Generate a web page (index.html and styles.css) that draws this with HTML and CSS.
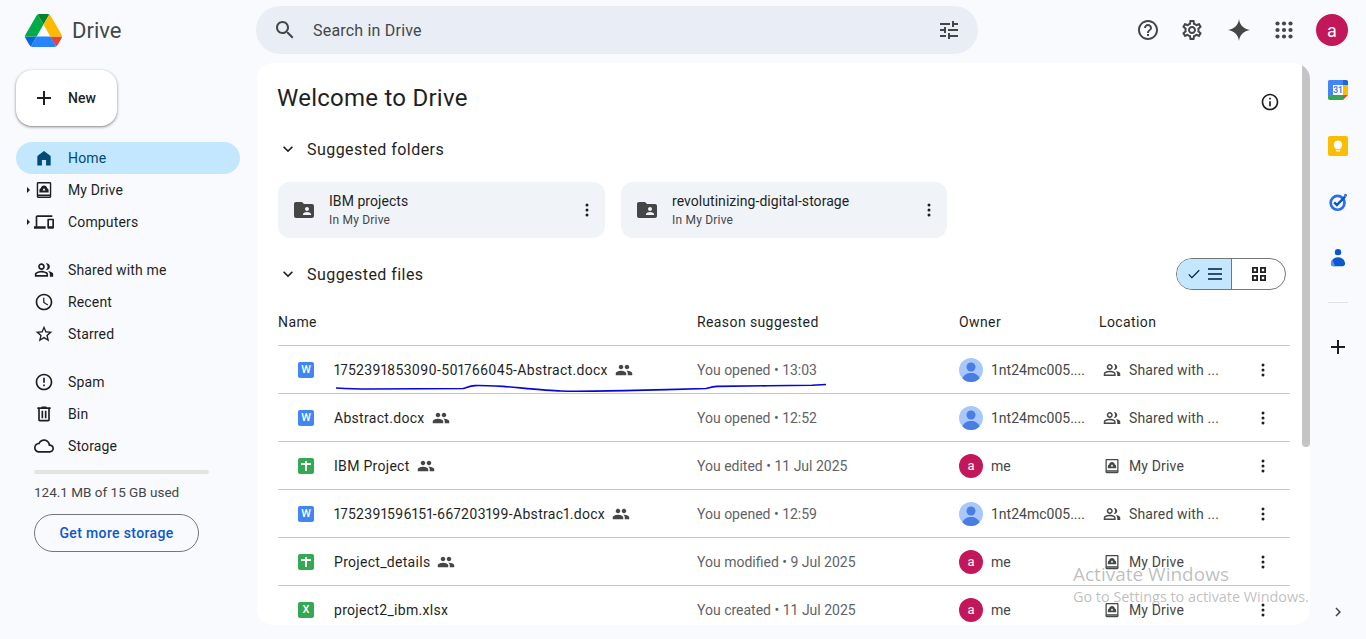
FILE: index.html
```html
<!DOCTYPE html>
<html lang="en">
<head>
<meta charset="utf-8">
<title>Home - Google Drive</title>
<link rel="stylesheet" href="styles.css">
</head>
<body>
<svg class="sprite" xmlns="http://www.w3.org/2000/svg">
  <symbol id="i-search" viewBox="0 0 24 24"><path d="M15.5 14h-.79l-.28-.27C15.41 12.59 16 11.11 16 9.5 16 5.91 13.09 3 9.5 3S3 5.91 3 9.5 5.91 16 9.5 16c1.61 0 3.09-.59 4.23-1.57l.27.28v.79l5 4.99L20.49 19l-4.99-5zm-6 0C7.01 14 5 11.99 5 9.5S7.01 5 9.5 5 14 7.01 14 9.5 11.99 14 9.5 14z"/></symbol>
  <symbol id="i-tune" viewBox="0 0 24 24"><path d="M3 17v2h6v-2H3zM3 5v2h10V5H3zm10 16v-2h8v-2h-8v-2h-2v6h2zM7 9v2H3v2h4v2h2V9H7zm14 4v-2H11v2h10zm-6-4h2V7h4V5h-4V3h-2v6z"/></symbol>
  <symbol id="i-help" viewBox="0 0 24 24"><path d="M11 18h2v-2h-2v2zm1-16C6.48 2 2 6.48 2 12s4.48 10 10 10 10-4.48 10-10S17.52 2 12 2zm0 18c-4.41 0-8-3.59-8-8s3.59-8 8-8 8 3.59 8 8-3.59 8-8 8zm0-14c-2.21 0-4 1.79-4 4h2c0-1.1.9-2 2-2s2 .9 2 2c0 2-3 1.75-3 5h2c0-2.25 3-2.5 3-5 0-2.21-1.79-4-4-4z"/></symbol>
  <symbol id="i-gear" viewBox="0 0 24 24"><path d="M19.43 12.98c.04-.32.07-.64.07-.98 0-.34-.03-.66-.07-.98l2.11-1.65c.19-.15.24-.42.12-.64l-2-3.46c-.09-.16-.26-.25-.44-.25-.06 0-.12.01-.17.03l-2.49 1c-.52-.4-1.08-.73-1.69-.98l-.38-2.65C14.46 2.18 14.25 2 14 2h-4c-.25 0-.46.18-.49.42l-.38 2.65c-.61.25-1.17.59-1.69.98l-2.49-1c-.06-.02-.12-.03-.18-.03-.17 0-.34.09-.43.25l-2 3.46c-.13.22-.07.49.12.64l2.11 1.65c-.04.32-.07.65-.07.98 0 .33.03.66.07.98l-2.11 1.65c-.19.15-.24.42-.12.64l2 3.46c.09.16.26.25.44.25.06 0 .12-.01.17-.03l2.49-1c.52.4 1.08.73 1.69.98l.38 2.65c.03.24.24.42.49.42h4c.25 0 .46-.18.49-.42l.38-2.65c.61-.25 1.17-.59 1.69-.98l2.49 1c.06.02.12.03.18.03.17 0 .34-.09.43-.25l2-3.46c.12-.22.07-.49-.12-.64l-2.11-1.65zm-1.98-1.71c.04.31.05.52.05.73 0 .21-.02.43-.05.73l-.14 1.13.89.7 1.08.84-.7 1.21-1.27-.51-1.04-.42-.9.68c-.43.32-.84.56-1.25.73l-1.06.43-.16 1.13-.2 1.35h-1.4l-.19-1.35-.16-1.13-1.06-.43c-.43-.18-.83-.41-1.23-.71l-.91-.7-1.06.43-1.27.51-.7-1.21 1.08-.84.89-.7-.14-1.13c-.03-.31-.05-.54-.05-.74s.02-.43.05-.73l.14-1.13-.89-.7-1.08-.84.7-1.21 1.27.51 1.04.42.9-.68c.43-.32.84-.56 1.25-.73l1.06-.43.16-1.13.2-1.35h1.39l.19 1.35.16 1.13 1.06.43c.43.18.83.41 1.23.71l.91.7 1.06-.43 1.27-.51.7 1.21-1.07.85-.89.7.14 1.13zM12 8c-2.21 0-4 1.79-4 4s1.79 4 4 4 4-1.79 4-4-1.79-4-4-4zm0 6c-1.1 0-2-.9-2-2s.9-2 2-2 2 .9 2 2-.9 2-2 2z"/></symbol>
  <symbol id="i-spark" viewBox="0 0 24 24"><path d="M12 1C12.7 7 17 11.3 23 12 17 12.7 12.7 17 12 23 11.3 17 7 12.7 1 12 7 11.3 11.3 7 12 1z"/></symbol>
  <symbol id="i-apps" viewBox="0 0 24 24"><circle cx="5.5" cy="5.5" r="2.1"/><circle cx="12" cy="5.5" r="2.1"/><circle cx="18.5" cy="5.5" r="2.1"/><circle cx="5.5" cy="12" r="2.1"/><circle cx="12" cy="12" r="2.1"/><circle cx="18.5" cy="12" r="2.1"/><circle cx="5.5" cy="18.5" r="2.1"/><circle cx="12" cy="18.5" r="2.1"/><circle cx="18.5" cy="18.5" r="2.1"/></symbol>
  <symbol id="i-home" viewBox="0 0 24 24"><path d="M4 21V10.5C4 9.9 4.3 9.3 4.8 8.9L10.8 4.4C11.5 3.9 12.5 3.9 13.2 4.4L19.2 8.9C19.7 9.3 20 9.9 20 10.5V21H14.5V14.5H9.5V21z"/></symbol>
  <symbol id="i-mydrive" viewBox="0 0 24 24"><path fill-rule="evenodd" d="M5 2.5h14c1 0 1.7.7 1.7 1.7v15.6c0 1-.7 1.7-1.7 1.7H5c-1 0-1.7-.7-1.7-1.7V4.200c0-1 .7-1.7 1.700-1.700zM5 4.200V17.500h14V4.200zM5 19.200v.6h14v-.6zM12 6.500c2 0 3.600 1.500 3.800 3.400 1 .3 1.700 1.200 1.700 2.300V15H6.500V12.200c0-1.100.7-2 1.700-2.300C8.400 8 10 6.500 12 6.500zM12 9.500l-1.800 3h3.600z"/></symbol>
  <symbol id="i-devices" viewBox="0 0 24 24"><path d="M4 6h18V4H4c-1.100 0-2 .9-2 2v11H0v3h14v-3H4V6zm19 2h-6c-.55 0-1 .45-1 1v10c0 .55.45 1 1 1h6c.55 0 1-.45 1-1V9c0-.55-.45-1-1-1zm-1 9h-4v-7h4v7z"/></symbol>
  <symbol id="i-peopleo" viewBox="0 0 24 24"><path d="M1 20v-2.800c0-.57.15-1.090.44-1.560.29-.47.67-.83 1.160-1.080.99-.5 2-.87 3.030-1.130A13.400 13.400 0 0 1 9 13c1.100 0 2.220.14 3.200.4 1.050.26 2.050.63 3.050 1.130.48.25.86.61 1.150 1.080.3.47.45.99.45 1.560V20H1zm18 0v-3c0-.73-.2-1.430-.61-2.100-.41-.67-.99-1.250-1.740-1.730.85.1 1.650.27 2.400.51.75.24 1.450.54 2.100.89.6.33 1.060.7 1.380 1.110.32.4.47.85.47 1.320v3h-4zM9 12c-1.100 0-2.040-.39-2.830-1.180C5.390 10.040 5 9.100 5 8s.39-2.040 1.170-2.820C6.960 4.390 7.900 4 9 4s2.040.39 2.830 1.180C12.610 5.960 13 6.900 13 8s-.39 2.040-1.170 2.820C11.040 11.610 10.100 12 9 12zm10-4c0 1.100-.39 2.040-1.170 2.820C17.040 11.610 16.100 12 15 12c-.18 0-.42-.02-.7-.06a6 6 0 0 0 1.420-1.800C16.070 9.490 16.250 8.770 16.250 8s-.18-1.490-.53-2.140a6 6 0 0 0-1.420-1.800c.28-.04.52-.06.7-.06 1.100 0 2.040.39 2.830 1.180C18.610 5.960 19 6.900 19 8zM3 18h12v-.8a1 1 0 0 0-.5-.85c-.9-.45-1.800-.79-2.730-1.020A11.700 11.700 0 0 0 9 15c-.93 0-1.850.11-2.780.33-.92.23-1.820.57-2.720 1.020A1 1 0 0 0 3 17.200V18zm6-8c.55 0 1.020-.2 1.410-.59C10.800 9.020 11 8.550 11 8s-.2-1.020-.59-1.410A1.930 1.930 0 0 0 9 6c-.55 0-1.020.2-1.410.59C7.200 6.980 7 7.450 7 8s.2 1.020.59 1.410C7.980 9.800 8.450 10 9 10z"/></symbol>
  <symbol id="i-people" viewBox="0 0 24 24"><path d="M16 11c1.660 0 2.990-1.340 2.990-3S17.660 5 16 5c-1.660 0-3 1.340-3 3s1.340 3 3 3zm-8 0c1.660 0 2.990-1.340 2.990-3S9.660 5 8 5C6.340 5 5 6.340 5 8s1.340 3 3 3zm0 2c-2.330 0-7 1.170-7 3.500V19h14v-2.500c0-2.330-4.670-3.500-7-3.500zm8 0c-.29 0-.62.02-.97.05 1.160.84 1.970 1.970 1.970 3.450V19h6v-2.500c0-2.330-4.670-3.500-7-3.500z"/></symbol>
  <symbol id="i-clock" viewBox="0 0 24 24"><path d="M11.990 2C6.470 2 2 6.480 2 12s4.470 10 9.990 10C17.520 22 22 17.520 22 12S17.520 2 11.990 2zM12 20c-4.420 0-8-3.580-8-8s3.580-8 8-8 8 3.580 8 8-3.580 8-8 8zm.5-13H11v6l5.250 3.150.75-1.230-4.500-2.670z"/></symbol>
  <symbol id="i-star" viewBox="0 0 24 24"><path d="M22 9.240l-7.190-.62L12 2 9.190 8.630 2 9.240l5.460 4.730L5.820 21 12 17.270 18.180 21l-1.630-7.030L22 9.240zM12 15.400l-3.760 2.270 1-4.280-3.320-2.880 4.380-.38L12 6.100l1.710 4.040 4.380.38-3.320 2.880 1 4.280L12 15.400z"/></symbol>
  <symbol id="i-spam" viewBox="0 0 24 24"><path d="M11 15h2v2h-2zm0-8h2v6h-2zm.99-5C6.470 2 2 6.480 2 12s4.470 10 9.990 10C17.520 22 22 17.520 22 12S17.520 2 11.990 2zM12 20c-4.420 0-8-3.580-8-8s3.580-8 8-8 8 3.580 8 8-3.580 8-8 8z"/></symbol>
  <symbol id="i-bin" viewBox="0 0 24 24"><path d="M15 4V3H9v1H4v2h1v13c0 1.100.9 2 2 2h10c1.100 0 2-.9 2-2V6h1V4h-5zm2 15H7V6h10v13zM9 8h2v9H9zm4 0h2v9h-2z"/></symbol>
  <symbol id="i-cloud" viewBox="0 0 24 24"><path d="M19.350 10.040C18.670 6.590 15.640 4 12 4 9.110 4 6.600 5.640 5.350 8.040 2.340 8.360 0 10.910 0 14c0 3.310 2.690 6 6 6h13c2.760 0 5-2.240 5-5 0-2.640-2.050-4.780-4.650-4.960zM19 18H6c-2.210 0-4-1.790-4-4s1.790-4 4-4h.71C7.370 7.690 9.480 6 12 6c3.040 0 5.500 2.460 5.500 5.500v.5H19c1.660 0 3 1.340 3 3s-1.340 3-3 3z"/></symbol>
  <symbol id="i-info" viewBox="0 0 24 24"><path d="M11 7h2v2h-2zm0 4h2v6h-2zm1-9C6.480 2 2 6.480 2 12s4.480 10 10 10 10-4.480 10-10S17.520 2 12 2zm0 18c-4.410 0-8-3.590-8-8s3.590-8 8-8 8 3.590 8 8-3.590 8-8 8z"/></symbol>
  <symbol id="i-more" viewBox="0 0 24 24"><circle cx="12" cy="6" r="1.800"/><circle cx="12" cy="12" r="1.800"/><circle cx="12" cy="18" r="1.800"/></symbol>
  <symbol id="i-expand" viewBox="0 0 24 24"><path d="M7.410 8.590L12 13.170l4.590-4.580L18 10l-6 6-6-6z"/></symbol>
  <symbol id="i-folder" viewBox="0 0 24 24"><path d="M20 6h-8l-2-2H4c-1.100 0-2 .9-2 2v12c0 1.100.9 2 2 2h16c1.100 0 2-.9 2-2V8c0-1.100-.9-2-2-2zm-5 3c1.100 0 2 .9 2 2s-.9 2-2 2-2-.9-2-2 .9-2 2-2zm4 8h-8v-1c0-1.330 2.670-2 4-2s4 .67 4 2v1z"/></symbol>
  <symbol id="i-plus" viewBox="0 0 24 24"><path d="M19 13h-6v6h-2v-6H5v-2h6V5h2v6h6z"/></symbol>
  <symbol id="i-avatar" viewBox="0 0 24 24"><circle cx="12" cy="12" r="12" fill="#a8c7fa"/><circle cx="12" cy="9" r="4.500" fill="#4a7de0"/><path d="M3.500 20.400C4.500 17 8 15 12 15s7.500 2 8.500 5.400C18.300 22.600 15.300 24 12 24s-6.300-1.400-8.500-3.600z" fill="#4a7de0"/></symbol>
</svg>

<header class="topbar">
  <div class="brand">
    <svg class="brand-logo" viewBox="0 0 87.300 78" xmlns="http://www.w3.org/2000/svg">
      <path d="m6.600 66.850 3.850 6.650c.8 1.400 1.950 2.500 3.300 3.300l13.750-23.800h-27.500c0 1.550.4 3.100 1.200 4.500z" fill="#0066da"/>
      <path d="m43.650 25-13.750-23.800c-1.350.8-2.500 1.900-3.300 3.300l-25.400 44a9.060 9.060 0 0 0 -1.200 4.500h27.500z" fill="#00ac47"/>
      <path d="m73.550 76.800c1.350-.8 2.500-1.900 3.300-3.300l1.600-2.750 7.650-13.250c.8-1.400 1.200-2.950 1.200-4.500h-27.502l5.852 11.500z" fill="#ea4335"/>
      <path d="m43.650 25 13.750-23.800c-1.350-.8-2.900-1.200-4.500-1.200h-18.500c-1.600 0-3.150.45-4.500 1.200z" fill="#00832d"/>
      <path d="m59.800 53h-32.300l-13.750 23.800c1.350.8 2.900 1.200 4.500 1.200h50.800c1.600 0 3.150-.45 4.500-1.200z" fill="#2684fc"/>
      <path d="m73.400 26.500-12.700-22c-.8-1.400-1.950-2.500-3.300-3.300l-13.750 23.800 16.150 28h27.450c0-1.550-.4-3.100-1.200-4.500z" fill="#ffba00"/>
    </svg>
    <span class="brand-name">Drive</span>
  </div>
  <div class="search">
    <svg class="ic24 c-dark"><use href="#i-search"/></svg>
    <span class="search-text">Search in Drive</span>
    <svg class="ic24 c-dark search-tune"><use href="#i-tune"/></svg>
  </div>
  <div class="actions">
    <svg class="ic24 c-dark"><use href="#i-help"/></svg>
    <svg class="ic24 c-dark"><use href="#i-gear"/></svg>
    <svg class="ic24 c-dark act-spark"><use href="#i-spark"/></svg>
    <svg class="ic24 c-dark act-apps"><use href="#i-apps"/></svg>
    <span class="avatar-main">a</span>
  </div>
</header>

<div class="layout">
  <aside class="sidebar">
    <button class="new-btn"><svg class="ic24 c-black"><use href="#i-plus"/></svg><span>New</span></button>
    <nav class="nav">
      <div class="nav-group">
        <a class="nav-item active"><span class="caret none"></span><svg class="ic20"><use href="#i-home"/></svg><span class="nav-label">Home</span></a>
        <a class="nav-item"><span class="caret"></span><svg class="ic20"><use href="#i-mydrive"/></svg><span class="nav-label">My Drive</span></a>
        <a class="nav-item"><span class="caret"></span><svg class="ic20"><use href="#i-devices"/></svg><span class="nav-label">Computers</span></a>
      </div>
      <div class="nav-group">
        <a class="nav-item"><span class="caret none"></span><svg class="ic20"><use href="#i-peopleo"/></svg><span class="nav-label">Shared with me</span></a>
        <a class="nav-item"><span class="caret none"></span><svg class="ic20"><use href="#i-clock"/></svg><span class="nav-label">Recent</span></a>
        <a class="nav-item"><span class="caret none"></span><svg class="ic20"><use href="#i-star"/></svg><span class="nav-label">Starred</span></a>
      </div>
      <div class="nav-group">
        <a class="nav-item"><span class="caret none"></span><svg class="ic20"><use href="#i-spam"/></svg><span class="nav-label">Spam</span></a>
        <a class="nav-item"><span class="caret none"></span><svg class="ic20"><use href="#i-bin"/></svg><span class="nav-label">Bin</span></a>
        <a class="nav-item"><span class="caret none"></span><svg class="ic20"><use href="#i-cloud"/></svg><span class="nav-label">Storage</span></a>
      </div>
    </nav>
    <div class="storage">
      <div class="storage-bar"></div>
      <div class="storage-text">124.1 MB of 15 GB used</div>
      <button class="storage-btn">Get more storage</button>
    </div>
  </aside>

  <main class="panel">
    <div class="content">
      <div class="welcome">
        <h1>Welcome to Drive</h1>
        <svg class="ic20 c-black"><use href="#i-info"/></svg>
      </div>
      <div class="section-head"><svg class="ic20 c-black"><use href="#i-expand"/></svg><span>Suggested folders</span></div>
      <div class="folders">
        <div class="folder">
          <svg class="ic24 c-dark"><use href="#i-folder"/></svg>
          <div class="folder-text"><div class="folder-name">IBM projects</div><div class="folder-sub">In My Drive</div></div>
          <svg class="ic20 c-black"><use href="#i-more"/></svg>
        </div>
        <div class="folder folder-b">
          <svg class="ic24 c-dark"><use href="#i-folder"/></svg>
          <div class="folder-text"><div class="folder-name">revolutinizing-digital-storage</div><div class="folder-sub">In My Drive</div></div>
          <svg class="ic20 c-black"><use href="#i-more"/></svg>
        </div>
      </div>
      <div class="files-head">
        <div class="section-head flat"><svg class="ic20 c-black"><use href="#i-expand"/></svg><span>Suggested files</span></div>
        <div class="toggle">
          <div class="toggle-list">
            <svg class="tg-check" viewBox="0 0 16 16"><path d="M2 8.500l3.600 3.600L14 3.700" fill="none" stroke="#001d35" stroke-width="1.300"/></svg>
            <svg class="tg-lines" viewBox="0 0 16 16"><path d="M1 3h14M1 8h14M1 13h14" stroke="#001d35" stroke-width="1.600"/></svg>
          </div>
          <div class="toggle-grid">
            <svg class="tg-grid" viewBox="0 0 16 16"><path fill-rule="evenodd" d="M1 1h6v6H1zM2.800 2.800v2.400h2.400V2.800zM9 1h6v6H9zM10.800 2.800v2.400h2.400V2.800zM1 9h6v6H1zM2.800 10.800v2.400h2.400v-2.400zM9 9h6v6H9zM10.800 10.800v2.400h2.400v-2.400z" fill="#1f1f1f"/></svg>
          </div>
        </div>
      </div>

      <div class="table">
        <div class="row row-head">
          <div>Name</div><div>Reason suggested</div><div>Owner</div><div>Location</div><div></div>
        </div>

        <div class="row">
          <div class="c-name"><span class="ft ft-doc">W</span><span class="fname">1752391853090-501766045-Abstract.docx</span><svg class="ic18"><use href="#i-people"/></svg></div>
          <div class="c-reason">You opened • 13:03</div>
          <div class="c-owner"><svg class="ic24"><use href="#i-avatar"/></svg><span>1nt24mc005....</span></div>
          <div class="c-loc"><svg class="ic18"><use href="#i-peopleo"/></svg><span>Shared with ...</span></div>
          <svg class="ic20 c-black"><use href="#i-more"/></svg>
        </div>
        <div class="row">
          <div class="c-name"><span class="ft ft-doc">W</span><span class="fname">Abstract.docx</span><svg class="ic18"><use href="#i-people"/></svg></div>
          <div class="c-reason">You opened • 12:52</div>
          <div class="c-owner"><svg class="ic24"><use href="#i-avatar"/></svg><span>1nt24mc005....</span></div>
          <div class="c-loc"><svg class="ic18"><use href="#i-peopleo"/></svg><span>Shared with ...</span></div>
          <svg class="ic20 c-black"><use href="#i-more"/></svg>
        </div>
        <div class="row">
          <div class="c-name"><span class="ft ft-sheet"><i class="cross"></i></span><span class="fname">IBM Project</span><svg class="ic18"><use href="#i-people"/></svg></div>
          <div class="c-reason">You edited • 11 Jul 2025</div>
          <div class="c-owner"><span class="avatar-sm">a</span><span>me</span></div>
          <div class="c-loc"><svg class="ic18"><use href="#i-mydrive"/></svg><span>My Drive</span></div>
          <svg class="ic20 c-black"><use href="#i-more"/></svg>
        </div>
        <div class="row">
          <div class="c-name"><span class="ft ft-doc">W</span><span class="fname">1752391596151-667203199-Abstrac1.docx</span><svg class="ic18"><use href="#i-people"/></svg></div>
          <div class="c-reason">You opened • 12:59</div>
          <div class="c-owner"><svg class="ic24"><use href="#i-avatar"/></svg><span>1nt24mc005....</span></div>
          <div class="c-loc"><svg class="ic18"><use href="#i-peopleo"/></svg><span>Shared with ...</span></div>
          <svg class="ic20 c-black"><use href="#i-more"/></svg>
        </div>
        <div class="row">
          <div class="c-name"><span class="ft ft-sheet"><i class="cross"></i></span><span class="fname">Project_details</span><svg class="ic18"><use href="#i-people"/></svg></div>
          <div class="c-reason">You modified • 9 Jul 2025</div>
          <div class="c-owner"><span class="avatar-sm">a</span><span>me</span></div>
          <div class="c-loc"><svg class="ic18"><use href="#i-mydrive"/></svg><span>My Drive</span></div>
          <svg class="ic20 c-black"><use href="#i-more"/></svg>
        </div>
        <div class="row">
          <div class="c-name"><span class="ft ft-xls">X</span><span class="fname">project2_ibm.xlsx</span></div>
          <div class="c-reason">You created • 11 Jul 2025</div>
          <div class="c-owner"><span class="avatar-sm">a</span><span>me</span></div>
          <div class="c-loc"><svg class="ic18"><use href="#i-mydrive"/></svg><span>My Drive</span></div>
          <svg class="ic20 c-black"><use href="#i-more"/></svg>
        </div>
      </div>
    </div>
    <div class="scrollbar"><div class="thumb"></div></div>
  </main>

  <aside class="rail">
    <svg class="rail-ic" viewBox="0 0 24 24">
      <path d="M2 0h18v6H6v12H0V2C0 1 1 0 2 0z" fill="#4285f4"/>
      <path d="M18 0h4c1 0 2 1 2 2v4h-6z" fill="#1967d2"/>
      <path d="M18 6h6v12h-6z" fill="#fbbc04"/>
      <path d="M0 18h18v6H2c-1 0-2-1-2-2z" fill="#34a853"/>
      <path d="M18 18h6l-6 6z" fill="#ea4335"/>
      <path d="M6 6h12v12H6z" fill="#fff"/>
      <text x="12" y="16" class="cal-num">31</text>
    </svg>
    <svg class="rail-ic" viewBox="0 0 24 24">
      <rect width="24" height="24" rx="2.500" fill="#fbbc04"/>
      <path d="M12 5.500a5 5 0 0 1 3 9v1.500H9v-1.500a5 5 0 0 1 3-9z" fill="#fff"/>
      <path d="M9.500 17.200h5v1.300h-5z" fill="#fff"/>
    </svg>
    <svg class="rail-ic" viewBox="0 0 24 24">
      <circle cx="11.500" cy="13" r="8.300" fill="none" stroke="#2a6fe8" stroke-width="3.200"/>
      <path d="M7.500 12.500l3.200 3.200L20.500 5.500" fill="none" stroke="#0b57d0" stroke-width="3"/>
      <circle cx="21" cy="4" r="1.800" fill="#2a6fe8"/>
    </svg>
    <svg class="rail-ic" viewBox="0 0 24 24">
      <circle cx="12" cy="5" r="3.800" fill="#0b57d0"/>
      <path d="M3.500 19c0-4 3.500-8 8.500-8s8.500 4 8.500 8c0 1.800-1.500 3-3 3h-11c-1.500 0-3-1.200-3-3z" fill="#0b57d0"/>
      <path d="M3.500 19c0-1.800.8-3.600 2-5l3 8h-2.500c-1.500 0-2.500-1.300-2.500-3z" fill="#5a8ee8"/>
    </svg>
    <div class="rail-div"></div>
    <svg class="rail-ic c-black"><use href="#i-plus"/></svg>
    <svg class="rail-chev" viewBox="0 0 24 24"><path d="M8.590 16.590L13.170 12 8.590 7.410 10 6l6 6-6 6z"/></svg>
  </aside>
</div>

<svg class="scribble" viewBox="0 0 1366 639" xmlns="http://www.w3.org/2000/svg"><path d="M336 388C345 388.500 358 389 368 389S440 388.500 463 388.500C468 387 470 385.800 475 385.600S495 386 503 386.400 545 390.500 561 391 615 390.800 634 390.400 695 388.800 706 388.500C710 387.500 712 386.700 717 386.400S790 385.600 812 385.300L826 384.500" fill="none" stroke="#0606dc" stroke-width="1.600"/></svg>

<div class="watermark">
  <div class="wm-title">Activate Windows</div>
  <div class="wm-sub">Go to Settings to activate Windows.</div>
</div>
</body>
</html>
```
FILE: styles.css
```css
* { box-sizing: border-box; }
html, body { height: 100%; }
body {
  margin: 0;
  height: 100vh;
  overflow: hidden;
  background: #f8fafd;
  color: #1f1f1f;
  font-family: Roboto, "Noto Sans", "Liberation Sans", sans-serif;
  font-size: 14px;
  display: flex;
  flex-direction: column;
  position: relative;
}
.sprite { display: none; }
svg { flex: none; display: block; fill: currentColor; }
.ic24 { width: 24px; height: 24px; }
.ic20 { width: 20px; height: 20px; }
.ic18 { width: 18px; height: 18px; }
.c-dark { color: #444746; }
.c-black { color: #1f1f1f; }

/* top bar */
.topbar { height: 60px; flex: none; display: flex; align-items: center; }
.brand { width: 256px; flex: none; display: flex; align-items: center; padding-left: 25px; }
.brand-logo { width: 37px; height: 33px; }
.brand-name { margin-left: 10px; font-size: 22px; color: #444746; }
.search {
  width: 722px; height: 48px; border-radius: 24px; background: #e9eef6;
  display: flex; align-items: center; padding: 0 17px;
}
.search-text { margin-left: 16px; font-size: 16px; color: #444746; letter-spacing: .2px; }
.search-tune { margin-left: auto; }
.actions { flex: 1; display: flex; align-items: center; justify-content: flex-end; gap: 20px; padding-right: 18px; }
.act-spark { margin-left: 3px; }
.act-apps { margin-left: 1px; }
.avatar-main {
  width: 32px; height: 32px; border-radius: 50%; background: #c2185b; color: #fff;
  display: flex; align-items: center; justify-content: center; font-size: 18px;
}

/* layout */
.layout { flex: 1; min-height: 0; display: flex; margin-top: 3px; margin-bottom: 14px; }

/* sidebar */
.sidebar { width: 257px; flex: none; padding-top: 7px; }
.new-btn {
  margin-left: 16px; width: 101px; height: 56px; border: 0; border-radius: 16px; background: #fff;
  box-shadow: 0 1px 2px rgba(0,0,0,.3), 0 1px 3px 1px rgba(0,0,0,.15);
  display: flex; align-items: center; gap: 12px; padding: 0 0 0 16px;
  font: 500 14px Roboto, sans-serif; color: #1f1f1f;
}
.nav { margin-top: 16px; }
.nav-group { margin-bottom: 16px; }
.nav-item { display: flex; align-items: center; height: 32px; width: 224px; margin-left: 16px; border-radius: 16px; padding-left: 11px; color: #1f1f1f; letter-spacing: .15px; }
.nav-item.active { background: #c2e7ff; color: #004a77; }
.caret { width: 0; height: 0; border-left: 3px solid #1f1f1f; border-top: 3px solid transparent; border-bottom: 3px solid transparent; margin-right: 4px; }
.caret.none { border-color: transparent; }
.nav-label { margin-left: 14px; }
.storage { margin-left: 34px; margin-top: -8px; }
.storage-bar { width: 175px; height: 4px; border-radius: 2px; background: #e3e3e0; }
.storage-text { margin-top: 10px; line-height: 16px; color: #444746; font-size: 13.5px; }
.storage-btn {
  margin-top: 14px; width: 165px; height: 38px; border-radius: 19px; border: 1px solid #747775; background: transparent;
  color: #0b57d0; font: 500 14px Roboto, sans-serif; letter-spacing: .35px;
}

/* main panel */
.panel { width: 1053px; flex: none; background: #fff; border-radius: 16px; overflow: hidden; display: flex; }
.content { flex: 1; min-width: 0; padding: 0 12px 0 21px; }
.scrollbar { width: 8px; flex: none; }
.thumb { height: 384px; background: #c4c4c4; border-radius: 4px 0 4px 4px; }
.welcome { height: 70px; display: flex; align-items: center; justify-content: space-between; padding-right: 10px; }
.welcome .ic20 { margin-top: 7px; }
h1 { margin: 0 0 0 -1px; font-size: 24px; font-weight: 400; line-height: 32px; letter-spacing: .25px; }
.section-head { display: flex; align-items: center; gap: 9px; height: 32px; font-size: 16px; font-weight: 400; letter-spacing: .45px; margin-bottom: 17px; }
.section-head.flat { margin-bottom: 0; }
.folders { display: flex; gap: 16px; }
.folder { width: 327px; height: 56px; background: #f0f4f9; border-radius: 12px; display: flex; align-items: center; padding: 0 8px 0 14px; }
.folder-b { width: 326px; }
.folder-text { margin-left: 13px; flex: 1; }
.folder-name { font-size: 14px; line-height: 19px; letter-spacing: .05px; }
.folder-sub { font-size: 12px; line-height: 16px; margin-top: 1px; color: #444746; letter-spacing: .2px; }
.files-head { display: flex; align-items: center; justify-content: space-between; margin-top: 20px; margin-right: 4px; height: 32px; }
.toggle { width: 110px; height: 32px; border: 1px solid #747775; border-radius: 16px; display: flex; overflow: hidden; }
.toggle-list { width: 55px; background: #c2e7ff; border-right: 1px solid #747775; display: flex; align-items: center; padding-left: 10px; gap: 6px; }
.toggle-grid { flex: 1; display: flex; align-items: center; justify-content: center; }
.tg-check { width: 14px; height: 14px; }
.tg-lines { width: 16px; height: 16px; }
.tg-grid { width: 16px; height: 16px; }

/* table */
.table { margin-top: 9px; }
.row {
  display: grid; grid-template-columns: 419px 262px 140px 147px 1fr;
  align-items: center; height: 48px; border-bottom: 1px solid #c7c7c7; color: #444746;
}
.row-head { height: 47px; color: #1f1f1f; letter-spacing: .4px; }
.c-name { display: flex; align-items: center; padding-left: 20px; color: #1f1f1f; }
.fname { margin-left: 20px; margin-right: 7px; letter-spacing: .3px; font-variant-numeric: proportional-nums; }
.c-name .ic18 { color: #444746; }
.ft { width: 16px; height: 16px; border-radius: 2px; color: #fff; display: flex; align-items: center; justify-content: center; font-size: 11px; font-weight: 500; position: relative; }
.ft-doc { background: #4285f4; }
.ft-sheet { background: #34a853; }
.ft-xls { background: #34a853; }
.cross { display: block; width: 10px; height: 10px; background: linear-gradient(#fff,#fff) 0 2px/10px 2px no-repeat, linear-gradient(#fff,#fff) 4px 0/2px 10px no-repeat; }
.c-reason { color: #5f6368; }
.c-owner { display: flex; align-items: center; gap: 8px; }
.avatar-sm { width: 24px; height: 24px; border-radius: 50%; background: #c2185b; color: #fff; display: flex; align-items: center; justify-content: center; font-size: 13px; }
.c-loc { display: flex; align-items: center; gap: 8px; padding-left: 4px; letter-spacing: .15px; }
.row > .ic20 { margin-left: 7px; }

/* right rail */
.rail { flex: 1; display: flex; flex-direction: column; align-items: center; padding: 17px 0 4px; position: relative; }
.rail-ic { width: 20px; height: 20px; margin-bottom: 36px; }
.rail-ic.c-black { width: 24px; height: 24px; margin-bottom: 0; }
.rail-ic + .rail-div { margin-top: -2px; }
.rail-div { width: 20px; height: 1px; background: #e3e3e3; margin-bottom: 32px; }
.rail-chev { width: 18px; height: 18px; margin-top: auto; color: #444746; }
.cal-num { font: 700 10px Roboto, sans-serif; fill: #4285f4; text-anchor: middle; }

/* overlays */
.scribble { position: absolute; left: 0; top: 0; width: 1366px; height: 639px; pointer-events: none; }
.watermark { position: absolute; left: 1073px; top: 561px; color: rgba(110,110,110,.45); font-family: "Open Sans", sans-serif; pointer-events: none; white-space: nowrap; }
.wm-title { font-size: 19px; line-height: 26px; }
.wm-sub { font-size: 14.4px; line-height: 19px; margin-top: 0; }
```
